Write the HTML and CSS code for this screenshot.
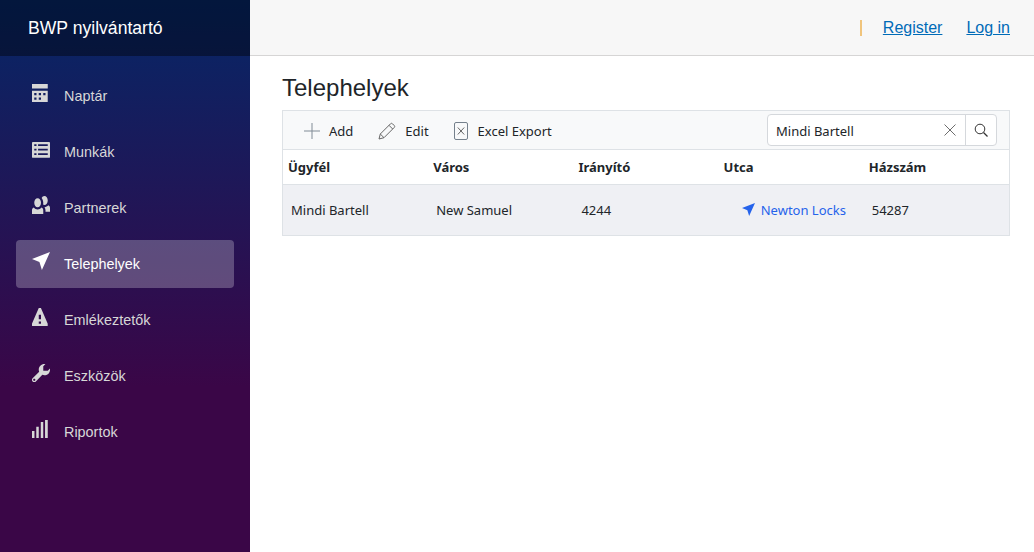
FILE: index.html
```html
<!DOCTYPE html>
<html lang="hu">

<head>
    <meta charset="UTF-8">
    <meta name="viewport" content="width=device-width, initial-scale=1.0">
    <title>BWP nyilvántartó</title>
    <link rel="stylesheet" href="styles.css">
</head>

<body>
    <div class="page">
        <aside class="sidebar">
            <div class="brand">BWP nyilvántartó</div>
            <nav class="nav">
                <a class="nav-link" href="#">
                    <svg class="nav-icon" viewBox="0 0 8 8"><path d="M0 0v2h7v-2h-7zm0 3v4.910c0 .05.04.09.09.09h6.810c.05 0 .09-.04.09-.09v-4.910h-7zm1 1h1v1h-1v-1zm2 0h1v1h-1v-1zm2 0h1v1h-1v-1zm-4 2h1v1h-1v-1zm2 0h1v1h-1v-1z"/></svg>
                    Naptár
                </a>
                <a class="nav-link" href="#">
                    <svg class="nav-icon" viewBox="0 0 8 8"><path fill-rule="evenodd" d="M.4.9h7.200a.4.4 0 0 1 .4.4v6.200a.4.4 0 0 1-.4.4h-7.200a.4.4 0 0 1-.4-.4v-6.200a.4.4 0 0 1 .4-.4zM1 1.900v.8h1v-.8zm1.700 0v.8h4.300v-.8zm-1.700 2v.8h1v-.8zm1.700 0v.8h4.300v-.8zm-1.700 2v.8h1v-.8zm1.700 0v.8h4.300v-.8z"/></svg>
                    Munkák
                </a>
                <a class="nav-link" href="#">
                    <svg class="nav-icon" viewBox="0 0 8 8"><path d="M5.500 0c-.51 0-.95.35-1.220.88.45.54.72 1.280.72 2.130 0 .29-.03.55-.09.81.19.11.38.19.59.19.83 0 1.500-.9 1.500-2s-.67-2-1.500-2zm-3 1c-.83 0-1.500.9-1.500 2s.67 2 1.500 2 1.500-.9 1.500-2-.67-2-1.500-2zm4.750 3.160c-.43.51-1.020.82-1.690.84.27.38.44.84.44 1.340v.66h2v-1.660c0-.52-.31-.97-.75-1.190zm-6.500 1c-.44.22-.75.67-.75 1.190v1.660h5v-1.660c0-.52-.31-.97-.75-1.190-.45.53-1.060.84-1.750.84s-1.300-.32-1.750-.84z"/></svg>
                    Partnerek
                </a>
                <a class="nav-link active" href="#">
                    <svg class="nav-icon" viewBox="0 0 8 8"><path d="M8 0L0 3.100 3.300 4.400 4.400 8z"/></svg>
                    Telephelyek
                </a>
                <a class="nav-link" href="#">
                    <svg class="nav-icon" viewBox="0 0 8 8"><path d="M3.090 0c-.06 0-.1.04-.13.09l-2.940 6.810c-.02.05-.03.13-.03.19v.81c0 .05.04.09.09.09h6.810c.05 0 .09-.04.09-.09v-.81c0-.05-.01-.14-.03-.19l-2.940-6.810c-.02-.05-.07-.09-.13-.09h-.81zm-.09 3h1v2h-1v-2zm0 3h1v1h-1v-1z"/></svg>
                    Emlékeztetők
                </a>
                <a class="nav-link" href="#">
                    <svg class="nav-icon" viewBox="0 0 8 8"><path d="M5.500 0c-1.380 0-2.500 1.120-2.500 2.500 0 .32.08.62.19.91l-2.910 2.880c-.39.39-.39 1.050 0 1.440.2.2.46.28.72.28.26 0 .52-.09.72-.28l2.880-2.910c.28.11.58.19.91.19 1.380 0 2.500-1.120 2.500-2.500 0-.16 0-.32-.03-.47l-.97.97h-2v-2l.97-.97c-.15-.03-.31-.03-.47-.03zm-4.500 6.500c.28 0 .5.22.5.5s-.22.5-.5.5-.5-.22-.5-.5.22-.5.5-.5z"/></svg>
                    Eszközök
                </a>
                <a class="nav-link" href="#">
                    <svg class="nav-icon" viewBox="0 0 8 8"><path d="M0 4.900h1.100v3.100h-1.100zM1.900 3h1.100v5h-1.100zM3.900.9h1.100v7.100h-1.100zM5.800 0h1.200v8h-1.200z"/></svg>
                    Riportok
                </a>
            </nav>
        </aside>

        <main class="main">
            <header class="top-row">
                <span class="top-sep"></span>
                <a href="#">Register</a>
                <a href="#">Log in</a>
            </header>

            <section class="content">
                <h1>Telephelyek</h1>

                <div class="grid">
                    <div class="toolbar">
                        <button class="tool tool-add">
                            <svg class="tool-icon" viewBox="0 0 16 16"><path d="M8 0v16M0 8h16" stroke="#808b96" fill="none"/></svg>
                            Add
                        </button>
                        <button class="tool">
                            <svg class="tool-icon tool-icon-edit" viewBox="0 0 18 18"><path d="M1 17l1.300-5L12.500 1.800a1.400 1.400 0 0 1 2 0l1.700 1.700a1.400 1.400 0 0 1 0 2L6 15.700zM2.300 12L6 15.700M11 3.300l3.700 3.700" stroke="#666" fill="none"/></svg>
                            Edit
                        </button>
                        <button class="tool">
                            <svg class="tool-icon tool-icon-excel" viewBox="0 0 14 18"><rect x="0.500" y="0.500" width="13" height="17" rx="1.500" stroke="#75808c" fill="none"/><path d="M3.800 5.500l6.400 7M10.200 5.500l-6.400 7" stroke="#666" fill="none"/></svg>
                            Excel Export
                        </button>
                        <div class="search">
                            <span class="search-text">Mindi Bartell</span>
                            <svg class="search-clear" viewBox="0 0 12 12"><path d="M.5.5l11 11M11.500.5l-11 11" stroke="#6d6d6d" fill="none"/></svg>
                            <span class="search-btn">
                                <svg class="search-icon" viewBox="0 0 14 14"><circle cx="6" cy="6" r="4.800" stroke="#333" fill="none"/><path d="M9.500 9.500l4 4" stroke="#333" stroke-width="1.300" fill="none"/></svg>
                            </span>
                        </div>
                    </div>

                    <table>
                        <thead>
                            <tr>
                                <th>Ügyfél</th>
                                <th>Város</th>
                                <th>Irányító</th>
                                <th>Utca</th>
                                <th>Házszám</th>
                            </tr>
                        </thead>
                        <tbody>
                            <tr>
                                <td>Mindi Bartell</td>
                                <td>New Samuel</td>
                                <td>4244</td>
                                <td class="cell-link">
                                    <a href="#">
                                        <svg class="link-icon" viewBox="0 0 8 8"><path d="M8 0L0 3.100 3.300 4.400 4.400 8z"/></svg>
                                        Newton Locks
                                    </a>
                                </td>
                                <td>54287</td>
                            </tr>
                        </tbody>
                    </table>
                </div>
            </section>
        </main>
    </div>
</body>

</html>
```

FILE: styles.css
```css
html,
body {
    height: 100%;
    margin: 0;
}

body {
    font-family: "Liberation Sans", Arial, sans-serif;
    font-size: 14px;
    color: #212529;
    background: #fff;
}

.page {
    display: flex;
    height: 100%;
}

/* menu bal oldalon */
.sidebar {
    width: 250px;
    flex-shrink: 0;
    background-image: linear-gradient(180deg, rgb(5, 39, 103) 0%, #3a0647 70%);
}

.brand {
    height: 56px;
    box-sizing: border-box;
    padding-left: 28px;
    line-height: 56px;
    font-size: 17.6px;
    color: #fff;
    background-color: rgba(0, 0, 0, 0.4);
}

.nav {
    display: flex;
    flex-direction: column;
    gap: 8px;
    padding: 16px 16px 0;
}

.nav-link {
    display: flex;
    align-items: center;
    height: 48px;
    padding-left: 16px;
    border-radius: 4px;
    color: #d7d7d7;
    text-decoration: none;
    font-size: 14.4px;
}

.nav-link.active {
    background-color: rgba(255, 255, 255, 0.25);
    color: #fff;
}

.nav-icon {
    width: 18px;
    height: 18px;
    margin: 0 14px 6px 0;
    fill: currentColor;
}

.main {
    flex: 1;
    min-width: 0;
}

.top-row {
    display: flex;
    justify-content: flex-end;
    align-items: center;
    gap: 24px;
    height: 56px;
    box-sizing: border-box;
    padding-right: 24px;
    background-color: #f7f7f7;
    border-bottom: 1px solid #d6d5d5;
    font-size: 16px;
}

.top-row a {
    color: #006bb7;
}

.top-sep {
    width: 2px;
    height: 16px;
    margin-right: -3px;
    background-color: #f0c47c;
}

.content {
    padding: 0 24px 0 32px;
}

h1 {
    margin: 0;
    padding-top: 17px;
    height: 37px;
    font-size: 24px;
    line-height: 30px;
    font-weight: 400;
}

/* racs */
.grid {
    border: 1px solid #dee2e6;
    font-family: "Noto Sans", "Open Sans", sans-serif;
    font-size: 13px;
}

.toolbar {
    display: flex;
    align-items: center;
    height: 39px;
    box-sizing: border-box;
    padding: 0 12px 0 21px;
    background-color: #f8f9fa;
    border-bottom: 1px solid #dee2e6;
}

.tool {
    display: flex;
    align-items: center;
    padding: 2px 0 0;
    margin-right: 24px;
    border: 0;
    background: none;
    font: inherit;
    color: #212529;
}

.tool-add {
    margin-right: 25px;
}

.tool-icon {
    width: 16px;
    height: 16px;
    margin-right: 9px;
}

.tool-icon-edit {
    width: 18px;
    height: 18px;
}

.tool-icon-excel {
    width: 14px;
    height: 18px;
    margin-left: 1px;
    margin-right: 10px;
}

.search {
    display: flex;
    align-items: center;
    width: 230px;
    height: 32px;
    box-sizing: border-box;
    margin-left: auto;
    padding-left: 8px;
    background-color: #fff;
    border: 1px solid #d5d8dc;
    border-radius: 4px;
}

.search-text {
    flex: 1;
    padding-top: 2px;
}

.search-clear {
    width: 12px;
    height: 12px;
    margin-right: 9px;
}

.search-btn {
    display: flex;
    align-items: center;
    justify-content: center;
    width: 30px;
    height: 100%;
    border-left: 1px solid #d5d8dc;
}

.search-icon {
    width: 14px;
    height: 14px;
}

table {
    width: 100%;
    table-layout: fixed;
    border-collapse: collapse;
}

th {
    height: 34px;
    padding: 0 5px;
    text-align: left;
    font-weight: 700;
    border-bottom: 1px solid #dee2e6;
}

td {
    height: 50px;
    padding: 0 8px;
    background-color: #eff0f4;
}

.cell-link {
    text-align: center;
    padding-left: 14px;
}

.cell-link a {
    color: #2563eb;
    text-decoration: none;
}

.link-icon {
    width: 13px;
    height: 13px;
    margin-right: 2px;
    fill: currentColor;
    vertical-align: -1px;
}
```
